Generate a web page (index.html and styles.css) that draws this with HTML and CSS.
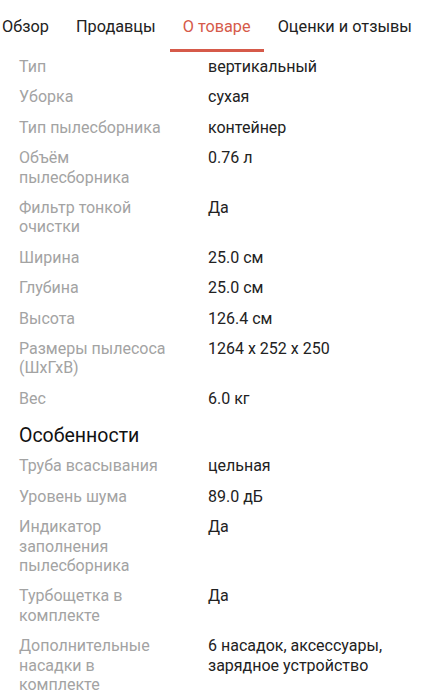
FILE: index.html
```html
<!DOCTYPE html>
<html lang="ru">
<head>
<meta charset="utf-8">
<link rel="stylesheet" href="styles.css">
</head>
<body>
<nav class="tabs">
  <div class="tab">Обзор</div>
  <div class="tab">Продавцы</div>
  <div class="tab active">О товаре</div>
  <div class="tab">Оценки и отзывы</div>
</nav>
<main class="specs">
  <div class="row"><div class="label">Тип</div><div class="value">вертикальный</div></div>
  <div class="row"><div class="label">Уборка</div><div class="value">сухая</div></div>
  <div class="row"><div class="label">Тип пылесборника</div><div class="value">контейнер</div></div>
  <div class="row"><div class="label">Объём пылесборника</div><div class="value">0.76 л</div></div>
  <div class="row"><div class="label">Фильтр тонкой очистки</div><div class="value">Да</div></div>
  <div class="row"><div class="label">Ширина</div><div class="value">25.0 см</div></div>
  <div class="row"><div class="label">Глубина</div><div class="value">25.0 см</div></div>
  <div class="row"><div class="label">Высота</div><div class="value">126.4 см</div></div>
  <div class="row"><div class="label">Размеры пылесоса (ШхГхВ)</div><div class="value">1264 x 252 x 250</div></div>
  <div class="row"><div class="label">Вес</div><div class="value">6.0 кг</div></div>
  <h2 class="section">Особенности</h2>
  <div class="row"><div class="label">Труба всасывания</div><div class="value">цельная</div></div>
  <div class="row"><div class="label">Уровень шума</div><div class="value">89.0 дБ</div></div>
  <div class="row"><div class="label">Индикатор заполнения пылесборника</div><div class="value">Да</div></div>
  <div class="row"><div class="label">Турбощетка в комплекте</div><div class="value">Да</div></div>
  <div class="row"><div class="label">Дополнительные насадки в комплекте</div><div class="value">6 насадок, аксессуары, зарядное устройство</div></div>
</main>
</body>
</html>
```

FILE: styles.css
```css
html, body {
  margin: 0;
  padding: 0;
  background: #fff;
  font-family: Roboto, "Noto Sans", sans-serif;
  overflow: hidden;
}
.tabs {
  display: flex;
  gap: 1px;
  margin-left: -11px;
  height: 52px;
  white-space: nowrap;
}
.tab {
  font-size: 16.3px;
  line-height: 20px;
  color: #222;
  padding: 17px 13px 0;
  box-sizing: border-box;
  height: 52px;
}
.tab.active {
  color: #d65a4a;
  border-bottom: 3px solid #d65a4a;
}
.specs {
  padding: 5px 19px 0 19px;
}
.row {
  display: grid;
  grid-template-columns: 153px 1fr;
  column-gap: 36px;
  font-size: 16px;
  line-height: 19.4px;
  padding-bottom: 11px;
}
.label { color: #a3a3a3; }
.value { color: #222; }
.section {
  margin: 5px 0 8px;
  font-size: 19.5px;
  font-weight: 400;
  line-height: 24px;
  color: #111;
}
```
